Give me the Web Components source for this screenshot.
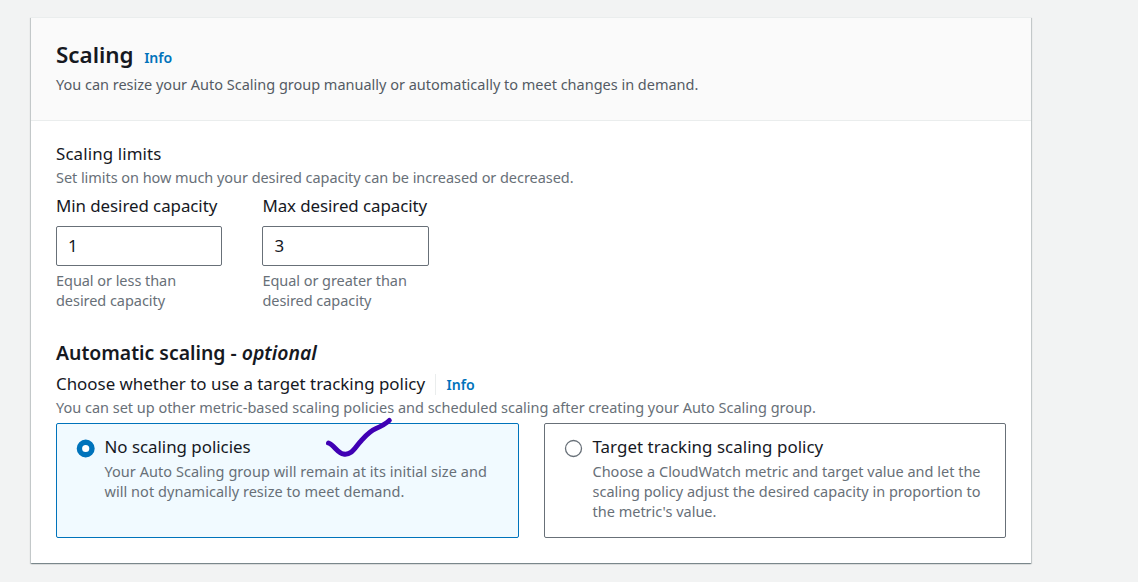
<!DOCTYPE html>
<html lang="en">
<head>
<meta charset="utf-8">
<title>Scaling</title>
<style>
html,body{margin:0;height:100%;background:#f2f3f3}
body{font-family:"Noto Sans","Open Sans",sans-serif;color:#16191f;overflow:hidden}
</style>
</head>
<body>
<scaling-page></scaling-page>
<script>
const define = (name, html) => customElements.define(name, class extends HTMLElement {
  constructor() {
    super();
    const t = document.createElement('template');
    t.innerHTML = html;
    this.attachShadow({mode: 'open'}).append(t.content.cloneNode(true));
  }
});

define('ui-label', `<style>
:host{display:block;font-size:16.9px;line-height:24px;white-space:nowrap;color:#16191f}
</style><slot></slot>`);

define('ui-hint', `<style>
:host{display:block;font-size:14.5px;line-height:20px;white-space:nowrap;color:#687078}
</style><slot></slot>`);

define('ui-info', `<style>
:host{display:inline-block;font-size:14.1px;line-height:20px;font-weight:600;color:#0073bb}
</style><slot></slot>`);

define('ui-panel', `<style>
:host{display:block;box-sizing:border-box;background:#fff;box-shadow:0 1px 1px 0 rgba(0,28,36,.3),1px 1px 1px 0 rgba(0,28,36,.15),-1px 1px 1px 0 rgba(0,28,36,.15)}
header{box-sizing:border-box;height:104px;padding:21px 25px 0;background:#fafafa;border-top:1px solid #eaeded;border-bottom:1px solid #eaeded}
main{padding:21px 25px 25px}
</style><header><slot name="header"></slot></header><main><slot></slot></main>`);

define('ui-field', `<style>
:host{display:block}
.box{box-sizing:border-box;height:40px;margin:8px 0 4px;padding:0 10px 0 11px;border:1px solid #687078;border-radius:2px;font-size:16.9px;line-height:38px;background:#fff}
</style><slot name="label"></slot><div class="box"><slot></slot></div><slot name="hint"></slot>`);

define('ui-tile', `<style>
:host{display:flex;box-sizing:border-box;height:115px;padding:11px 19px 9px;gap:9.5px;border:1px solid #687078;border-radius:2px;background:#fff}
:host([selected]){border-color:#0073bb;background:#f1faff}
svg{display:block;width:19px;height:19px;margin-top:4px;flex:none}
circle{fill:#fff;stroke:#687078;stroke-width:1.3}
:host([selected]) circle{stroke:#0073bb;stroke-width:5.4}
.a{display:none}
:host([selected]) .a{display:block}
:host([selected]) .b{display:none}
.t{display:block;margin-bottom:2px}
</style><svg viewBox="0 0 19 19"><circle class="a" cx="9.7" cy="9.5" r="6.3"/><circle class="b" cx="9.5" cy="9.5" r="8"/></svg>
<div><div class="t"><slot name="label"></slot></div><slot></slot></div>`);

define('ink-check', `<style>
:host{display:block;width:70px;height:44px;pointer-events:none}
svg{display:block}
</style><svg width="70" height="44" viewBox="0 0 70 44"><path d="M5.500 27C11 29 15 37.500 20.500 38C29 39.500 32 31 38 25C43 19.500 46 15.500 53 12.500C58 10.300 62 8.500 66.300 4.500" fill="none" stroke="#4000b4" stroke-width="5" stroke-linecap="round" stroke-linejoin="round"/></svg>`);

define('scaling-page', `<style>
:host{display:block;padding:17px 107px 0 31px;position:relative}
.title{display:flex;align-items:baseline;gap:10.5px;height:35px}
h1{margin:0;font-size:22.4px;line-height:32px;font-weight:600}
.fields{display:grid;grid-template-columns:166px 167px;column-gap:40.4px;margin-top:7px}
h2{margin:30px 0 6px;font-size:19.4px;line-height:26px;font-weight:600;white-space:nowrap}
.q{display:flex;align-items:center}
.q ui-info{margin-left:10px;padding-left:10.5px;border-left:1px solid #eaeded;padding-top:1px}
.tiles{display:grid;grid-template-columns:463px 462px;column-gap:25px;margin-top:6px}
ink-check{position:absolute;left:323.3px;top:416px}
</style>
<ui-panel>
  <div slot="header">
    <div class="title"><h1>Scaling</h1><ui-info>Info</ui-info></div>
    <ui-hint style="color:#545b64;letter-spacing:-.01px">You can resize your Auto Scaling group manually or automatically to meet changes in demand.</ui-hint>
  </div>
  <ui-label style="letter-spacing:.12px">Scaling limits</ui-label>
  <ui-hint style="letter-spacing:-.052px;margin-top:1px">Set limits on how much your desired capacity can be increased or decreased.</ui-hint>
  <div class="fields">
    <ui-field><ui-label slot="label" style="letter-spacing:-.06px">Min desired capacity</ui-label>1<ui-hint slot="hint" style="letter-spacing:-.05px">Equal or less than<br>desired capacity</ui-hint></ui-field>
    <ui-field><ui-label slot="label" style="letter-spacing:-.07px">Max desired capacity</ui-label>3<ui-hint slot="hint" style="letter-spacing:-.05px">Equal or greater than<br>desired capacity</ui-hint></ui-field>
  </div>
  <h2>Automatic scaling - <i>optional</i></h2>
  <div class="q"><ui-label>Choose whether to use a target tracking policy</ui-label><ui-info>Info</ui-info></div>
  <ui-hint style="letter-spacing:-.013px;margin-top:1px">You can set up other metric-based scaling policies and scheduled scaling after creating your Auto Scaling group.</ui-hint>
  <div class="tiles">
    <ui-tile selected><ui-label slot="label" style="letter-spacing:-.02px">No scaling policies</ui-label><ui-hint style="letter-spacing:.04px">Your Auto Scaling group will remain at its initial size and<br>will not dynamically resize to meet demand.</ui-hint></ui-tile>
    <ui-tile><ui-label slot="label" style="letter-spacing:.05px">Target tracking scaling policy</ui-label><ui-hint>Choose a CloudWatch metric and target value and let the<br>scaling policy adjust the desired capacity in proportion to<br>the metric's value.</ui-hint></ui-tile>
  </div>
</ui-panel>
<ink-check></ink-check>`);
</script>
</body>
</html>
